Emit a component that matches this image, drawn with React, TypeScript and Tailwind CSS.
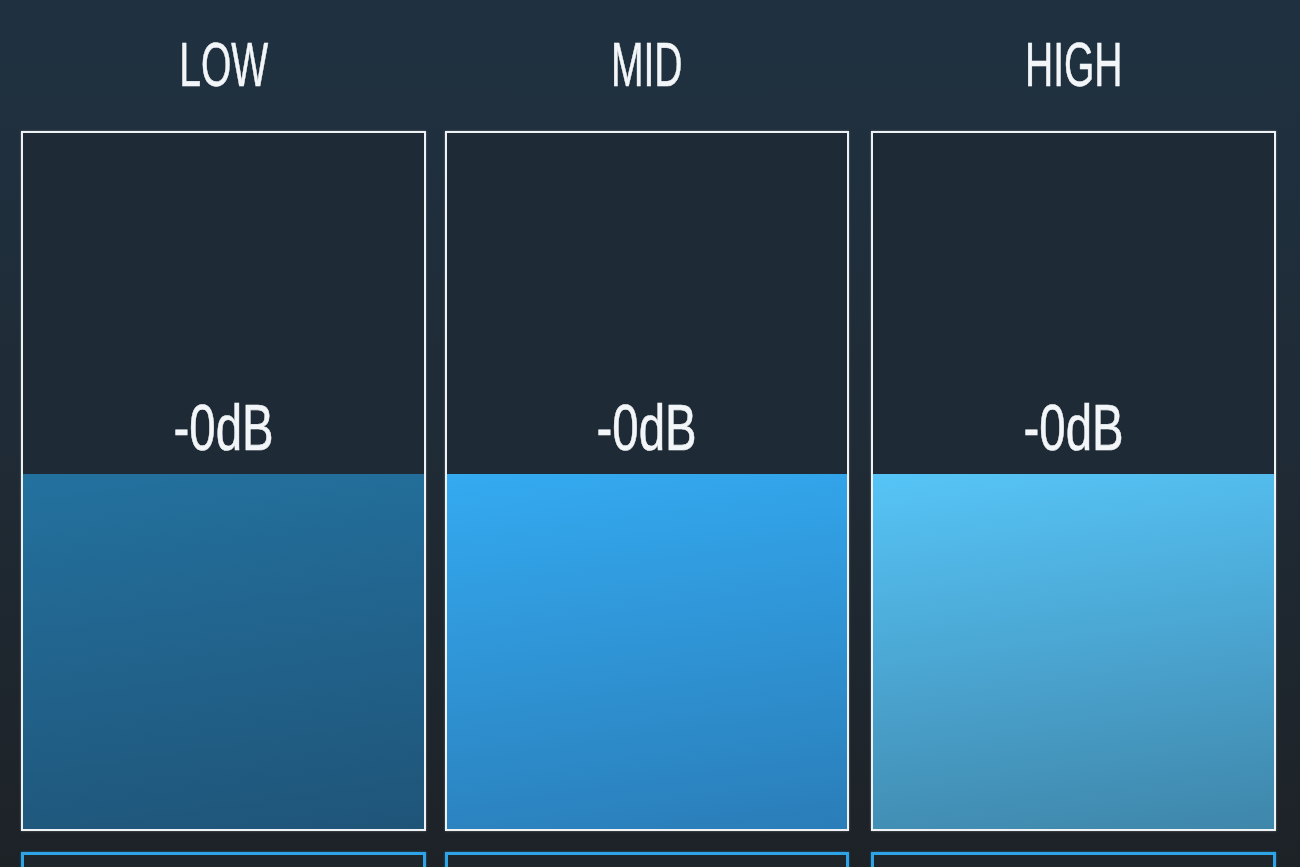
import React from 'react';

type Band = {
  name: string;
  gain: string;
  fill: string;
  width: string;
  offset: string;
};

const bands: Band[] = [
  { name: 'LOW', gain: '-0dB', fill: 'bg-[linear-gradient(172deg,#23719f,#1f5478)]', width: 'w-[405px]', offset: 'ml-[21px]' },
  { name: 'MID', gain: '-0dB', fill: 'bg-[linear-gradient(172deg,#34aaf1,#2a7db8)]', width: 'w-[404px]', offset: 'ml-[19px]' },
  { name: 'HIGH', gain: '-0dB', fill: 'bg-[linear-gradient(172deg,#56c4f7,#3f86aa)]', width: 'w-[405px]', offset: 'ml-[22px]' },
];

const condensed = { fontFamily: '"Liberation Sans Narrow", "Liberation Sans", "DejaVu Sans Condensed", sans-serif' };

function BandColumn({ band }: { band: Band }) {
  return (
    <div className={`flex flex-col shrink-0 ${band.width} ${band.offset}`}>
      {/* Label */}
      <div className="h-[131px] flex items-center justify-center pb-[2px]">
        <span
          className="text-[63px] leading-none text-[#f3f6f8] scale-x-[0.62] inline-block [-webkit-text-stroke:0.6px_#f3f6f8]"
          style={condensed}
        >
          {band.name}
        </span>
      </div>

      {/* Gain meter */}
      <div className="h-[700px] border-2 border-[#eef2f4] bg-[#1e2a35] flex flex-col shadow-[0_0_2px_rgba(255,255,255,0.35)]">
        <div className="h-[341px] flex items-end justify-center pb-[14px]">
          <span
            className="text-[64px] leading-none text-[#f3f6f8] scale-x-[0.74] inline-block [-webkit-text-stroke:0.6px_#f3f6f8]"
            style={condensed}
          >
            {band.gain}
          </span>
        </div>
        <div className={`flex-1 ${band.fill}`} />
      </div>

      {/* Next row (cut off) */}
      <div className="mt-[21px] h-[60px] border-[3px] border-[#2ea3e6] bg-[#1e252b] shadow-[0_0_2px_rgba(46,163,230,0.5)]" />
    </div>
  );
}

export default function App() {
  return (
    <div className="w-[1300px] h-[867px] overflow-hidden bg-gradient-to-b from-[#1f3141] via-[#1f2b36] to-[#1d2227]">
      <div className="flex">
        {bands.map((b) => (
          <BandColumn key={b.name} band={b} />
        ))}
      </div>
    </div>
  );
}
